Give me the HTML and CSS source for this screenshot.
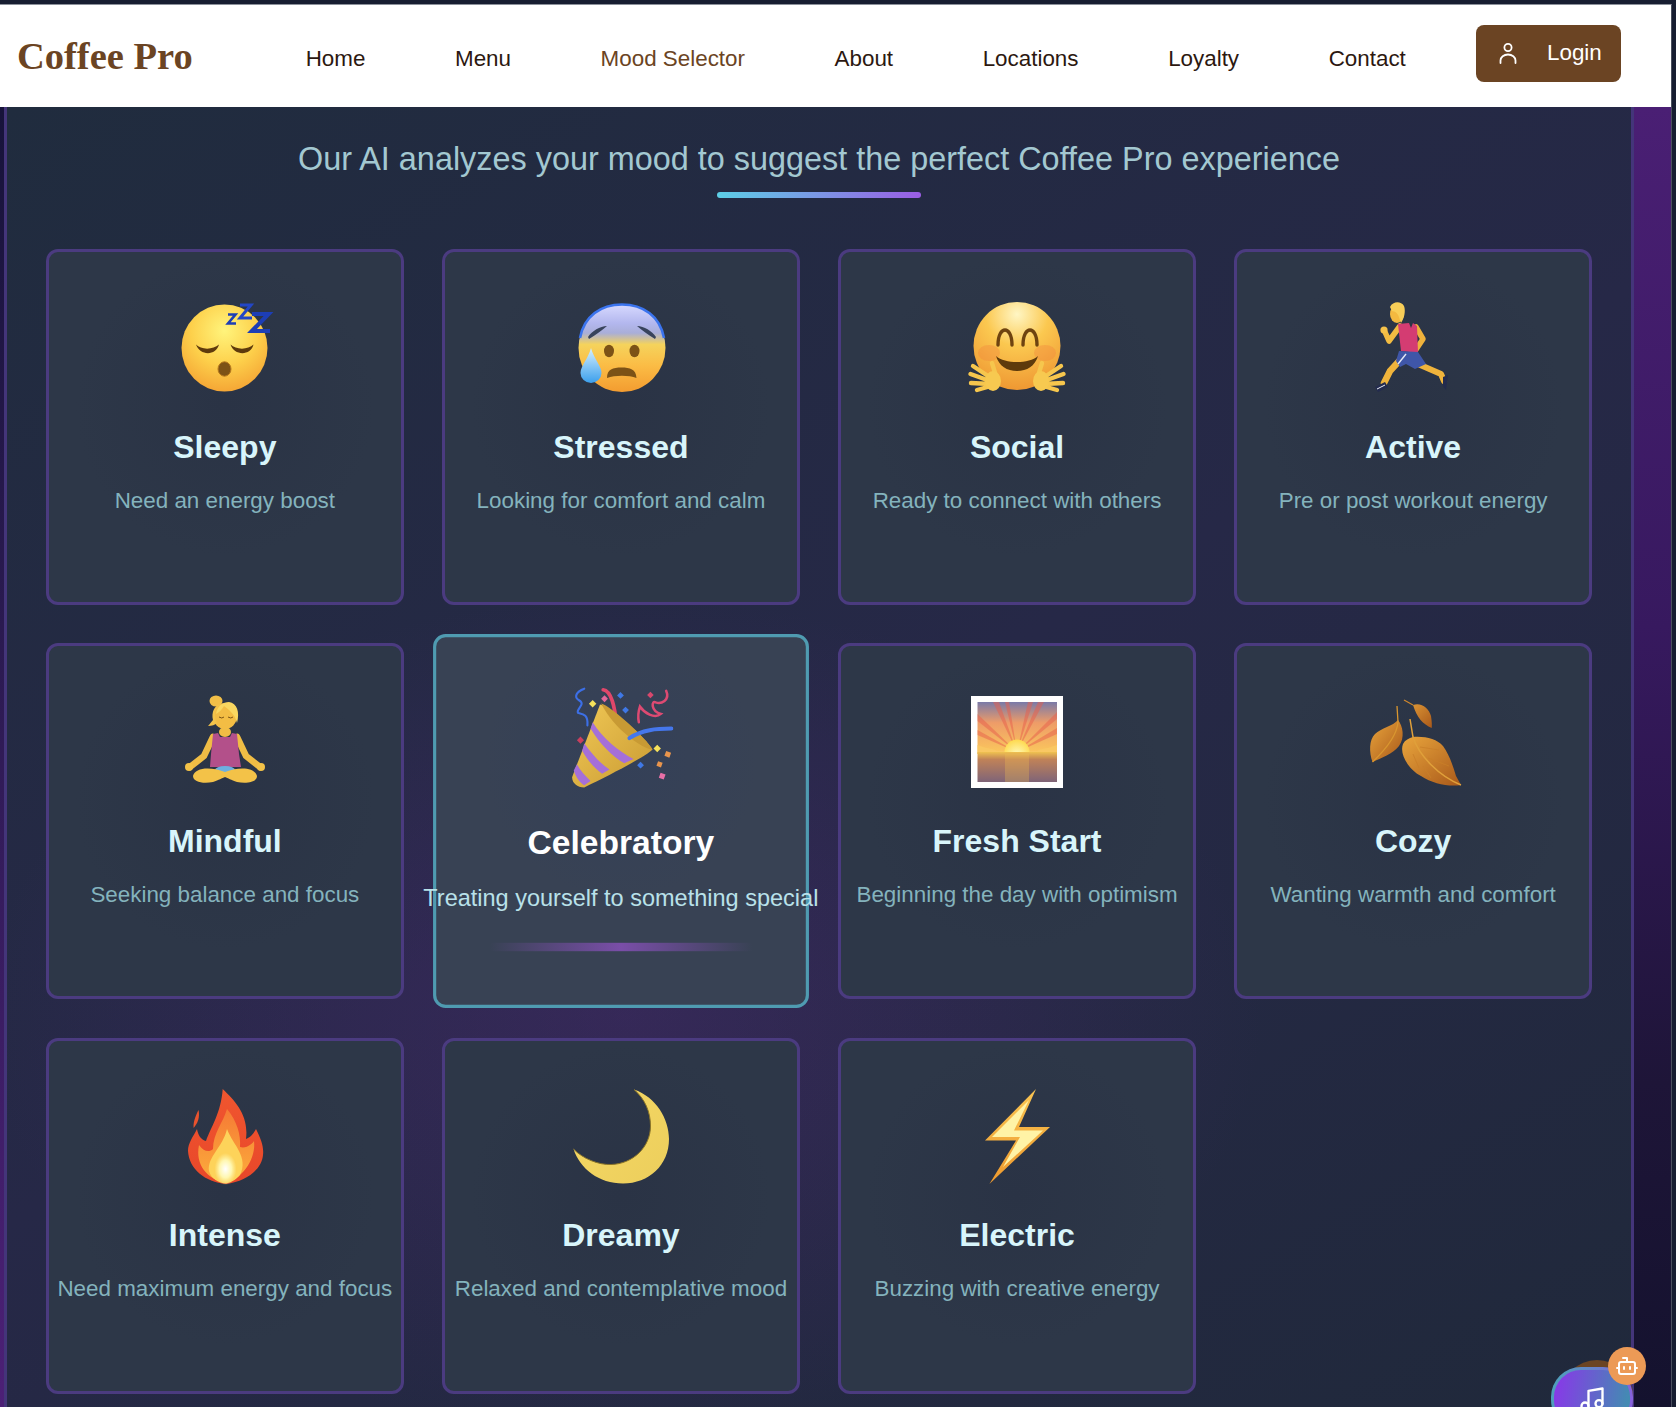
FILE: index.html
```html
<!DOCTYPE html>
<html lang="en">
<head>
  <meta charset="UTF-8" />
  <meta name="viewport" content="width=device-width, initial-scale=1.0" />
  <title>Mood Selector | Coffee Pro</title>
  <link rel="stylesheet" href="styles.css">
</head>
<body>
  <!-- shared gradients for the emoji drawings -->
  <svg class="svg-defs" aria-hidden="true">
    <defs>
      <radialGradient id="faceSun" cx="0.5" cy="0.3" r="0.78">
        <stop offset="0" stop-color="#fff47c"/>
        <stop offset="0.5" stop-color="#fdd04b"/>
        <stop offset="1" stop-color="#f39c30"/>
      </radialGradient>
      <radialGradient id="faceWarm" cx="0.5" cy="0.14" r="0.9">
        <stop offset="0" stop-color="#fff6c4"/>
        <stop offset="0.4" stop-color="#fbc850"/>
        <stop offset="1" stop-color="#ee9430"/>
      </radialGradient>
      <linearGradient id="faceCold" x1="0" y1="0" x2="0" y2="1">
        <stop offset="0" stop-color="#d8daff"/>
        <stop offset="0.22" stop-color="#b3b7ee"/>
        <stop offset="0.33" stop-color="#a9aed8"/>
        <stop offset="0.46" stop-color="#f5d35c"/>
        <stop offset="0.7" stop-color="#fbbc45"/>
        <stop offset="1" stop-color="#f39c30"/>
      </linearGradient>
      <linearGradient id="tearFill" x1="0" y1="0" x2="0" y2="1">
        <stop offset="0" stop-color="#d7f0ff"/>
        <stop offset="1" stop-color="#3b9fec"/>
      </linearGradient>
      <linearGradient id="coneFill" x1="0" y1="0" x2="1" y2="1">
        <stop offset="0" stop-color="#f1c956"/>
        <stop offset="1" stop-color="#c99a32"/>
      </linearGradient>
      <linearGradient id="skyFill" x1="0" y1="0" x2="0" y2="1">
        <stop offset="0" stop-color="#7a7aa8"/>
        <stop offset="0.4" stop-color="#ee9c68"/>
        <stop offset="1" stop-color="#fbc85c"/>
      </linearGradient>
      <linearGradient id="seaFill" x1="0" y1="0" x2="0" y2="1">
        <stop offset="0" stop-color="#f0c250"/>
        <stop offset="0.25" stop-color="#c08258"/>
        <stop offset="1" stop-color="#7f6478"/>
      </linearGradient>
      <radialGradient id="sunFill" cx="0.5" cy="0.6" r="0.6">
        <stop offset="0" stop-color="#fffabc"/>
        <stop offset="1" stop-color="#fed94e"/>
      </radialGradient>
      <linearGradient id="leafFill" x1="0" y1="0" x2="1" y2="1">
        <stop offset="0" stop-color="#e9a53c"/>
        <stop offset="1" stop-color="#a9591a"/>
      </linearGradient>
      <linearGradient id="flameOuter" x1="0" y1="0" x2="0" y2="1">
        <stop offset="0" stop-color="#f0562f"/>
        <stop offset="1" stop-color="#e8472a"/>
      </linearGradient>
      <linearGradient id="flameMid" x1="0" y1="0" x2="0" y2="1">
        <stop offset="0" stop-color="#f57a35"/>
        <stop offset="1" stop-color="#fcae3c"/>
      </linearGradient>
      <radialGradient id="flameCore">
        <stop offset="0" stop-color="#ffffff"/>
        <stop offset="0.55" stop-color="#fff7b0"/>
        <stop offset="1" stop-color="#fff0a0" stop-opacity="0"/>
      </radialGradient>
      <linearGradient id="moonFill" x1="0" y1="0" x2="1" y2="1">
        <stop offset="0" stop-color="#f6d965"/>
        <stop offset="1" stop-color="#ecce5c"/>
      </linearGradient>
      <linearGradient id="boltFill" x1="0" y1="0" x2="0" y2="1">
        <stop offset="0" stop-color="#f9c452"/>
        <stop offset="1" stop-color="#ee9a2e"/>
      </linearGradient>
    </defs>
  </svg>

  <div class="window">
    <header class="site-header">
      <div class="logo">Coffee Pro</div>
      <nav class="nav">
        <a href="#">Home</a>
        <a href="#">Menu</a>
        <a href="#" class="active">Mood Selector</a>
        <a href="#">About</a>
        <a href="#">Locations</a>
        <a href="#">Loyalty</a>
        <a href="#">Contact</a>
      </nav>
      <button class="login">
        <svg viewBox="0 0 24 24" fill="none" stroke="#fff" stroke-width="1.8" stroke-linecap="round">
          <circle cx="12" cy="6.5" r="3.6"/>
          <path d="M4.5 22v-2.5a7.5 6 0 0 1 15 0V22"/>
        </svg>
        <span>Login</span>
      </button>
    </header>

    <div class="stage">
      <div class="edge edge-left"></div>
      <main class="mood-section">
        <p class="subtitle">Our AI analyzes your mood to suggest the perfect Coffee Pro experience</p>
        <div class="divider"></div>

        <div class="mood-grid">
          <article class="mood-card">
            <svg class="mood-emoji" viewBox="0 0 100 100">
              <ellipse cx="49.5" cy="50" rx="43" ry="43.5" fill="url(#faceSun)"/>
              <path d="M21 46.5C26 52 38 52 44 46.5C41 58 25 58 21 46.5Z" fill="#5e3a0c"/>
              <path d="M55.5 46.5C61 52 73 52 78.5 46.5C76 58 59 58 55.5 46.5Z" fill="#5e3a0c"/>
              <ellipse cx="49.5" cy="71" rx="6.5" ry="7.2" fill="#7d5216" stroke="#b5781d" stroke-width="1"/>
              <polyline points="53,16.5 60.5,16.5 53,25.5 61,25.5" fill="none" stroke="#1d3eb5" stroke-width="2.6"/>
              <polyline points="65,7 76,7 65,20 77,20" fill="none" stroke="#2346c6" stroke-width="3"/>
              <polyline points="77,16 93.5,16 77,33 95,33" fill="none" stroke="#1d3eb5" stroke-width="4.2"/>
            </svg>
            <h3 class="mood-name">Sleepy</h3>
            <p class="mood-desc">Need an energy boost</p>
          </article>

          <article class="mood-card">
            <svg class="mood-emoji" viewBox="0 0 100 100">
              <ellipse cx="51" cy="50" rx="43.5" ry="44" fill="url(#faceCold)"/>
              <path d="M9 40C13 18 30 6.5 51 6.5S89 18 93 40" fill="none" stroke="#3b74ee" stroke-width="2.6"/>
              <path d="M17 39C21 33 29 28 36 28C31 32 25 37 18 41Z" fill="#38435c"/>
              <path d="M85 39C81 33 73 28 66 28C71 32 77 37 84 41Z" fill="#38435c"/>
              <ellipse cx="38" cy="53" rx="5" ry="6.2" fill="#7c5216"/>
              <ellipse cx="63.5" cy="53" rx="5" ry="6.2" fill="#7c5216"/>
              <path d="M36 80C36 71 42 69.500 50.500 69.500S65 71 65.500 80C58 77 44 77 36 80Z" fill="#7c5216"/>
              <path d="M20 50C23 61 30.500 68 30.500 75A10.500 10 0 0 1 9.500 75C9.500 68 17 61 20 50Z" fill="url(#tearFill)"/>
            </svg>
            <h3 class="mood-name">Stressed</h3>
            <p class="mood-desc">Looking for comfort and calm</p>
          </article>

          <article class="mood-card">
            <svg class="mood-emoji" viewBox="0 0 100 100">
              <ellipse cx="50" cy="48" rx="43.5" ry="44" fill="url(#faceWarm)"/>
              <ellipse cx="22" cy="55" rx="11" ry="8" fill="#f0803c" opacity="0.35"/>
              <ellipse cx="78" cy="55" rx="11" ry="8" fill="#f0803c" opacity="0.35"/>
              <path d="M31 47C31 27 45 27 45 47" fill="none" stroke="#6e4310" stroke-width="3.4" stroke-linecap="round"/>
              <path d="M56 47C56 27 70 27 70 47" fill="none" stroke="#6e4310" stroke-width="3.4" stroke-linecap="round"/>
              <path d="M29 58C38 66 62 66 71 58C68 68 60 73 50 73S32 68 29 58Z" fill="#5e3a0c"/>
              <g fill="none" stroke="#f6c64d" stroke-width="4.4" stroke-linecap="round">
                <path d="M24 80L6 68M23 83L3.500 76M23 86L4 85M24 88L10 92M29 78L25 65"/>
                <ellipse cx="26" cy="83" rx="8" ry="10" fill="#f7c950" stroke="none"/>
              </g>
              <g transform="translate(100 0) scale(-1 1)" fill="none" stroke="#f6c64d" stroke-width="4.4" stroke-linecap="round">
                <path d="M24 80L6 68M23 83L3.500 76M23 86L4 85M24 88L10 92M29 78L25 65"/>
                <ellipse cx="26" cy="83" rx="8" ry="10" fill="#f7c950" stroke="none"/>
              </g>
            </svg>
            <h3 class="mood-name">Social</h3>
            <p class="mood-desc">Ready to connect with others</p>
          </article>

          <article class="mood-card">
            <svg class="mood-emoji" viewBox="0 0 100 100">
              <g fill="none" stroke-linecap="round" stroke-linejoin="round">
                <path d="M53 29L60 41L52 53" stroke="#efb23c" stroke-width="5.500"/>
                <path d="M55 66L78 76L81 83" stroke="#f0b43c" stroke-width="6"/>
                <path d="M38 61L27 73L21 85" stroke="#f0b43c" stroke-width="6.500"/>
                <path d="M37 28L26 43L22 34" stroke="#f3bc42" stroke-width="5.500"/>
              </g>
              <path d="M35 26L46 25L48 30L50 25L54 28L55 55L38 53Z" fill="#d43c72"/>
              <path d="M36 53L55 54L63 66L52 71L43 66L37 69L33 63Z" fill="#3f56a8"/>
              <path d="M35 66L43 56" stroke="#e4e8f5" stroke-width="1.400"/>
              <ellipse cx="34" cy="16" rx="7" ry="9" fill="#f3b940"/>
              <path d="M27 9C30 3 38 3 41 8C43 13 41 21 38 25C36 20 36 14 29 13Z" fill="#f8ce58"/>
              <path d="M12 89L22 84L25 89L15 94Z" fill="#232b4e"/>
              <path d="M14 91L22 87" stroke="#e8ebf5" stroke-width="1"/>
              <path d="M80 79L85 77L83 92L80 88Z" fill="#232b4e"/>
              <circle cx="21" cy="32" r="3.600" fill="#f6c24a"/>
            </svg>
            <h3 class="mood-name">Active</h3>
            <p class="mood-desc">Pre or post workout energy</p>
          </article>

          <article class="mood-card">
            <svg class="mood-emoji" viewBox="0 0 100 100">
              <g fill="none" stroke="#f0bd45" stroke-width="6.500" stroke-linecap="round">
                <path d="M38 45L29 64L15 75"/>
                <path d="M62 45L71 64L85 75"/>
              </g>
              <ellipse cx="50" cy="40" rx="6" ry="5" fill="#f0bd45"/>
              <path d="M38 42L43 41L45 45L55 45L57 41L62 42L64 62L66 75L35 75L36 62Z" fill="#b3508a"/>
              <ellipse cx="50" cy="78" rx="10" ry="4" fill="#6db0e0"/>
              <path d="M18 84C20 76 34 74 50 80C66 74 80 76 82 84C82 90 72 92 62 90C56 88 53 86 50 85C47 86 44 88 38 90C28 92 18 90 18 84Z" fill="#f3c248"/>
              <ellipse cx="50" cy="24" rx="12" ry="13" fill="#f3bd44"/>
              <ellipse cx="41" cy="9" rx="6.500" ry="5.500" fill="#f2bf48"/>
              <path d="M38 28C36 30 34 33 33 34C37 34 40 33 42 31C38 24 40 15 46 13C40 12 36 20 38 28Z" fill="#f4c44b"/>
              <path d="M41 22C42 14 48 10 54 10C62 11 65 20 62 31C60 22 54 18 49 14C46 19 43 21 41 22Z" fill="#f9d760"/>
              <path d="M44 25Q47 27 49 25M53 25Q56 27 58 25" fill="none" stroke="#6e4810" stroke-width="0.900"/>
              <circle cx="14" cy="75" r="4" fill="#f3c248"/>
              <circle cx="86" cy="75" r="4" fill="#f3c248"/>
            </svg>
            <h3 class="mood-name">Mindful</h3>
            <p class="mood-desc">Seeking balance and focus</p>
          </article>

          <article class="mood-card selected">
            <svg class="mood-emoji" viewBox="0 0 100 100">
              <g fill="none" stroke-linecap="round">
                <path d="M15 3C7 6 5 11 10 14C17 18 7 22 9 26C13 27 19 27 18 38" stroke="#3c6fe6" stroke-width="2"/>
                <path d="M33 4C41 5 44 20 46 38" stroke="#e0476a" stroke-width="3.400"/>
                <path d="M93 5C97 14 88 18 83 16C79 14 78 24 88 27C82 32 72 26 68 20C66 26 66 30 67 35" stroke="#dd4a72" stroke-width="2.400"/>
              </g>
              <path d="M30 18C40 20 74 50 80 61C76 66 42 84 15 97C8 97 3 92 3.500 87Z" fill="url(#coneFill)"/>
              <path d="M31 17C40 19 74 50 80 61C70 60 44 42 31 17Z" fill="#c89a34"/>
              <path d="M21 41L23 35C32 50 48 63 62 70L53 74C42 68 30 56 21 41Z" fill="#a56fd8"/>
              <path d="M13 62L15 55C22 65 30 74 39 80L32 84C25 79 18 71 13 62Z" fill="#a56fd8"/>
              <path d="M5 81L8 75C11 81 16 86 21 91L15 95C10 92 7 87 5 81Z" fill="#a56fd8"/>
              <path d="M58 50C70 42 84 41 98 41" fill="none" stroke="#4577ec" stroke-width="3.800" stroke-linecap="round"/>
              <g>
                <rect x="20.500" y="14.800" width="5" height="5" fill="#f6e15b" transform="rotate(45 23 17.300)"/>
                <rect x="32" y="10.300" width="4.600" height="4.600" fill="#e2689b" transform="rotate(45 34.300 12.600)"/>
                <rect x="47.200" y="7.100" width="4.600" height="4.600" fill="#3f78e6" transform="rotate(45 49.500 9.400)"/>
                <rect x="52" y="21.100" width="4.600" height="4.600" fill="#3f78e6" transform="rotate(45 54.300 23.400)"/>
                <rect x="75.800" y="6.800" width="4.400" height="4.400" fill="#d8486d" transform="rotate(45 78 9)"/>
                <rect x="9" y="49.600" width="4.800" height="4.800" fill="#c93f5e" transform="rotate(45 11.400 52)"/>
                <rect x="82" y="57.500" width="5" height="5" fill="#f6e15b" transform="rotate(45 84.500 60)"/>
                <rect x="92" y="63" width="5" height="5" fill="#e8944c" transform="rotate(20 94.600 65.600)"/>
                <rect x="66.300" y="73.500" width="4.600" height="4.600" fill="#3f78e6" transform="rotate(45 68.600 75.800)"/>
                <rect x="84.400" y="72.700" width="4.600" height="4.600" fill="#e8944c" transform="rotate(20 86.700 75)"/>
                <rect x="86.700" y="83.800" width="5" height="5" fill="#e76fa6" transform="rotate(20 89.200 86.300)"/>
              </g>
            </svg>
            <h3 class="mood-name">Celebratory</h3>
            <p class="mood-desc">Treating yourself to something special</p>
          </article>

          <article class="mood-card">
            <svg class="mood-emoji" viewBox="0 0 100 100">
              <rect x="4" y="4" width="92" height="92" fill="#fff"/>
              <rect x="10.500" y="10" width="79.500" height="52" fill="url(#skyFill)"/>
              <g fill="#e8604c" opacity="0.5">
                <polygon points="50,60 26,10 32,10"/>
                <polygon points="50,60 61,10 66,10"/>
                <polygon points="50,60 71,10 77,10"/>
                <polygon points="50,60 10.500,22 10.500,29"/>
                <polygon points="50,60 90,20 90,27"/>
                <polygon points="50,60 10.500,38 10.500,43"/>
                <polygon points="50,60 90,36 90,42"/>
                <polygon points="50,60 38,10 42,10"/>
              </g>
              <path d="M10.500 62V53L16 55C20 57 26 56 30 59L70 59C74 56 80 57 84 55L90 53V62Z" fill="#f9c763"/>
              <circle cx="50" cy="60" r="12.500" fill="url(#sunFill)"/>
              <rect x="10.500" y="60" width="79.500" height="30" fill="url(#seaFill)"/>
              <rect x="38" y="62" width="24" height="28" fill="#f2bf52" opacity="0.3"/>
            </svg>
            <h3 class="mood-name">Fresh Start</h3>
            <p class="mood-desc">Beginning the day with optimism</p>
          </article>

          <article class="mood-card">
            <svg class="mood-emoji" viewBox="0 0 100 100">
              <path d="M41 8L50 13C58 10 66 16 68 24C69 30 69 34 68.700 36C60 32 54 26 50 13Z" fill="url(#leafFill)"/>
              <path d="M41 8L50 13" stroke="#d1882c" stroke-width="1.200"/>
              <path d="M35 28C40 34 42 46 36 54C30 62 18 66 9.500 70C6 60 6 48 12 42C18 36 30 34 35 28Z" fill="url(#leafFill)"/>
              <path d="M34 14L35 30C34 44 20 60 9.500 70" fill="none" stroke="#d9962f" stroke-width="1.300"/>
              <path d="M50 45C62 44 74 47 80 54C86 62 90 74 93 84L98 93C86 95 70 92 58 84C46 78 36 62 40 52C42 48 46 46 50 45Z" fill="url(#leafFill)"/>
              <path d="M47 27L50 45C56 64 76 84 98 93" fill="none" stroke="#e0a03a" stroke-width="1.500"/>
              <path d="M57 55L76 58M65 66L86 74M50 62L56 76M60 74L68 86" fill="none" stroke="#c97f28" stroke-width="0.800"/>
            </svg>
            <h3 class="mood-name">Cozy</h3>
            <p class="mood-desc">Wanting warmth and comfort</p>
          </article>

          <article class="mood-card">
            <svg class="mood-emoji" viewBox="0 0 100 100">
              <path d="M23.500 23C20 30 18 36 18.600 41C23 36 25 30 23.500 23Z" fill="#e9532e"/>
              <path d="M47.700 2C60 14 74 28 71 52C74 51 78 48 81 42C86 52 89 60 88 68C87 82 72 94 51 97C30 95 14 82 13 64C13 56 18 50 22 42C23 48 26 53 31 54C36 40 46 26 47.700 2Z" fill="url(#flameOuter)"/>
              <path d="M52 22C62 34 66 48 65 60C72 62 78 56 79 54C81 70 70 90 51 96C32 92 20 78 24 58C28 64 34 66 38 62C38 46 48 36 52 22Z" fill="url(#flameMid)"/>
              <path d="M52 42C58 58 74 70 65 88C60 94 54 96 51 96.500C44 96 36 92 34 84C32 70 48 60 52 42Z" fill="#fdd35a"/>
              <ellipse cx="50.500" cy="82" rx="11" ry="16" fill="url(#flameCore)"/>
            </svg>
            <h3 class="mood-name">Intense</h3>
            <p class="mood-desc">Need maximum energy and focus</p>
          </article>

          <article class="mood-card">
            <svg class="mood-emoji" viewBox="0 0 100 100">
              <path d="M63 2.500C85 10 98 32 98 52C98 78 78 96.500 52 96.500C28 96.500 9 82 2.500 62C12 72 28 78 40 77.500C62 77 79.500 60 79.500 39C79.500 25 74 12 63 2.500Z" fill="url(#moonFill)"/>
              <path d="M2.500 62C12 72 28 78 40 77.500C62 77 79.500 60 79.500 39C79.500 25 74 12 63 2.500" fill="none" stroke="#8a7428" stroke-width="1"/>
            </svg>
            <h3 class="mood-name">Dreamy</h3>
            <p class="mood-desc">Relaxed and contemplative mood</p>
          </article>

          <article class="mood-card">
            <svg class="mood-emoji" viewBox="0 0 100 100">
              <polygon points="69,2 18,53.500 49,53.500 22.400,97 83,40 52,40" fill="url(#boltFill)"/>
              <polygon points="62,13 25,50 53,50 36,80 76,43.500 47,43.500" fill="#fff3a6"/>
            </svg>
            <h3 class="mood-name">Electric</h3>
            <p class="mood-desc">Buzzing with creative energy</p>
          </article>
        </div>
      </main>
      <div class="edge edge-right"></div>
    </div>
  </div>

  <!-- floating widgets, bottom right -->
  <div class="fab-brown"></div>
  <button class="fab-music">
    <svg viewBox="0 0 24 24" fill="none" stroke="#fff" stroke-width="2" stroke-linecap="round" stroke-linejoin="round">
      <path d="M9 18V5l12-2v13"/>
      <circle cx="6" cy="18" r="3"/>
      <circle cx="18" cy="16" r="3"/>
    </svg>
  </button>
  <button class="fab-bot">
    <svg viewBox="0 0 24 24" fill="none" stroke="#fff" stroke-width="2" stroke-linecap="round" stroke-linejoin="round">
      <path d="M12 8V4H8"/>
      <rect x="4" y="8" width="16" height="12" rx="2"/>
      <path d="M2 14h2M20 14h2M15 13v2M9 13v2"/>
    </svg>
  </button>
</body>
</html>
```
FILE: styles.css
```css
html, body {
  margin: 0;
  height: 100%;
}
body {
  background-color: #171d31;
  font-family: "Liberation Sans", Arial, sans-serif;
  overflow: hidden;
  position: relative;
}
.svg-defs {
  position: absolute;
  width: 0;
  height: 0;
}
.window {
  margin: 4px 4px 0 0;
  height: calc(100% - 4px);
  box-sizing: border-box;
  border-top: 1px solid #8c919b;
  border-right: 1px solid #4a4f5e;
  display: flex;
  flex-direction: column;
}

/* header */
.site-header {
  height: 102px;
  flex: none;
  background: #fff;
  display: flex;
  align-items: center;
  padding: 0 50px 0 17px;
}
.logo {
  font-family: "Liberation Serif", "Times New Roman", serif;
  font-weight: 700;
  font-size: 38.5px;
  color: #6b4423;
}
.nav {
  display: flex;
  gap: 89.6px;
  margin-left: 113px;
  margin-top: 5px;
}
.nav a {
  color: #2c1810;
  font-size: 22.4px;
  text-decoration: none;
}
.nav a.active {
  color: #6b4423;
}
.login {
  margin-left: auto;
  margin-top: -5px;
  height: 57px;
  width: 145px;
  box-sizing: border-box;
  padding: 0 0 2px 20px;
  display: flex;
  align-items: center;
  gap: 27px;
  border: none;
  border-radius: 8px;
  background: #6b4423;
  color: #fff;
  font-family: inherit;
  font-size: 22.4px;
}
.login svg {
  width: 24px;
  height: 24px;
  flex: none;
}

/* page body */
.stage {
  flex: 1;
  display: flex;
  min-height: 0;
}
.edge {
  flex: none;
}
.edge-left {
  width: 4px;
  background: linear-gradient(180deg, #17133a 0%, #2a1a50 40%, #4c2076 100%);
}
.edge-right {
  width: 37px;
  background: linear-gradient(180deg, #4a1f74 0%, #37195f 40%, #1e1538 75%, #14122e 100%);
}
.mood-section {
  flex: 1;
  min-width: 0;
  border-left: 3px solid #44357a;
  border-right: 3px solid #44357a;
  padding: 0 39px;
  background:
    radial-gradient(ellipse 640px 420px at 38% 70%, rgba(92, 42, 132, 0.3), rgba(92, 42, 132, 0) 100%),
    linear-gradient(150deg, #202c3e 0%, #262847 50%, #20293b 100%);
}
.subtitle {
  margin: 31px 0 0;
  text-align: center;
  font-size: 32.4px;
  font-weight: 300;
  line-height: 42px;
  color: #a3c8d1;
}
.divider {
  width: 204px;
  height: 6px;
  margin: 12px auto 0;
  border-radius: 3px;
  background: linear-gradient(90deg, #5ccfe6, #9b5de5);
}

/* mood cards */
.mood-grid {
  margin-top: 51px;
  display: grid;
  grid-template-columns: repeat(4, minmax(0, 1fr));
  grid-auto-rows: 356px;
  gap: 38.4px;
}
.mood-card {
  position: relative;
  box-sizing: border-box;
  padding-top: 46px;
  border: 3px solid #4b3b80;
  border-radius: 12px;
  background:
    radial-gradient(circle 150px at 50% 44%, #2a3345, rgba(42, 51, 69, 0) 100%),
    #2d3748;
  text-align: center;
}
.mood-emoji {
  display: block;
  width: 100px;
  height: 100px;
  margin: 0 auto;
}
.mood-name {
  margin: 29.5px 0 0;
  font-size: 32px;
  line-height: 38px;
  font-weight: 700;
  color: #d8f5fb;
}
.mood-desc {
  margin: 22px 0 0;
  font-size: 22.4px;
  line-height: 26px;
  color: #84b3bd;
  white-space: nowrap;
  display: flex;
  justify-content: center;
}
.mood-card.selected {
  transform: scale(1.05);
  border-color: #4f9bb1;
  background:
    radial-gradient(circle 130px at 50% 34%, #344058, rgba(52, 64, 88, 0) 100%),
    #384254;
}
.mood-card.selected .mood-name {
  color: #fff;
}
.mood-card.selected .mood-desc {
  color: #b9e1ea;
}
.mood-card.selected::after {
  content: "";
  position: absolute;
  left: 50%;
  top: 291px;
  width: 250px;
  height: 8px;
  margin-left: -125px;
  background: linear-gradient(90deg, rgba(122, 78, 168, 0), #7a4ea8 50%, rgba(122, 78, 168, 0));
}

/* floating widgets */
.fab-brown {
  position: absolute;
  left: 1561px;
  top: 1360px;
  width: 72px;
  height: 72px;
  border-radius: 50%;
  background: #6b4423;
}
.fab-music {
  position: absolute;
  left: 1551px;
  top: 1367px;
  width: 82px;
  height: 63px;
  box-sizing: border-box;
  padding: 0;
  border: 3px solid transparent;
  border-radius: 30px;
  background:
    linear-gradient(100deg, #8b35ea, #3d92ae) padding-box,
    linear-gradient(100deg, #4aa3b8, #8a5ce0) border-box;
  display: flex;
  align-items: center;
  justify-content: center;
}
.fab-music svg {
  width: 28px;
  height: 28px;
}
.fab-bot {
  position: absolute;
  left: 1608px;
  top: 1347px;
  width: 38px;
  height: 38px;
  padding: 0;
  border: none;
  border-radius: 50%;
  background: #ec9a56;
  display: flex;
  align-items: center;
  justify-content: center;
}
.fab-bot svg {
  width: 24px;
  height: 24px;
}
```
